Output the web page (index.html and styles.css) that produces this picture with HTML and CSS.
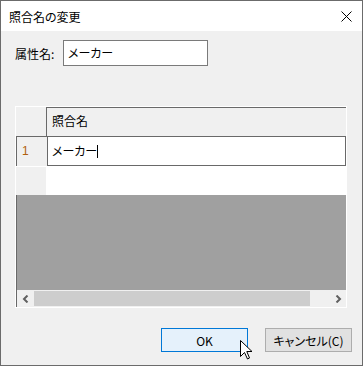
FILE: index.html
```html
<!DOCTYPE html>
<html lang="ja">
<head>
    <meta charset="UTF-8">
    <title>照合名の変更</title>
    <link rel="stylesheet" href="styles.css">
</head>
<body>
    <div class="window">
        <div class="titlebar">
            <span class="title">照合名の変更</span>
            <svg class="close" width="11" height="11" viewBox="0 0 11 11">
                <path d="M0.5 0.5 L10.5 10.5 M10.5 0.5 L0.5 10.5" stroke="#000" stroke-width="1" fill="none"/>
            </svg>
        </div>
        <div class="dialog-body">
            <div class="field">
                <label class="field-label">属性名:</label>
                <div class="textbox">メーカー</div>
            </div>

            <div class="grid">
                <div class="grid-row header-row">
                    <div class="row-head corner"></div>
                    <div class="col-head">照合名</div>
                </div>
                <div class="grid-row current-row">
                    <div class="row-head">1</div>
                    <div class="cell editing">メーカー<span class="caret"></span></div>
                </div>
                <div class="grid-row new-row">
                    <div class="row-head"></div>
                    <div class="cell"></div>
                </div>
                <div class="grid-empty"></div>
                <div class="hscroll">
                    <div class="scroll-btn">
                        <svg width="8" height="8" viewBox="0 0 8 8"><path d="M5.5 0.5 L2 4 L5.5 7.5" stroke="#606060" stroke-width="2" fill="none"/></svg>
                    </div>
                    <div class="scroll-track"><div class="scroll-thumb"></div></div>
                    <div class="scroll-btn">
                        <svg width="8" height="8" viewBox="0 0 8 8"><path d="M2.5 0.5 L6 4 L2.5 7.5" stroke="#606060" stroke-width="2" fill="none"/></svg>
                    </div>
                </div>
            </div>

            <div class="buttons">
                <button class="btn btn-default">OK</button>
                <button class="btn">キャンセル(C)</button>
            </div>
        </div>

        <!-- mouse pointer over the OK button -->
        <svg class="pointer" width="13" height="20" viewBox="0 0 13 20">
            <path d="M0.5 0.5 L0.5 16.5 L4.5 12.5 L7.5 19 L9.5 18 L6.8 11.5 L12 11.5 Z" fill="#fff" stroke="#000" stroke-width="1" stroke-linejoin="miter"/>
        </svg>
    </div>
</body>
</html>
```

FILE: styles.css
```css
* {
    box-sizing: border-box;
}

body {
    margin: 0;
    padding: 0;
    font-family: "Noto Sans CJK JP", "Noto Sans", sans-serif;
    font-size: 12px;
    font-feature-settings: "palt";
    color: #000;
    background: #f0f0f0;
}

.window {
    position: relative;
    width: 363px;
    height: 366px;
    border: 1px solid #6b6b6b;
    background: #f0f0f0;
    display: flex;
    flex-direction: column;
}

.titlebar {
    height: 30px;
    background: #fff;
    display: flex;
    align-items: center;
    justify-content: space-between;
    padding: 0 10px 0 8px;
}

.title {
    line-height: 30px;
    padding-top: 1px;
}

.close {
    display: block;
}

.dialog-body {
    flex: 1;
    display: flex;
    flex-direction: column;
}

.field {
    display: flex;
    align-items: center;
    margin-top: 9px;
    padding-left: 14px;
    height: 26px;
}

.field-label {
    width: 48px;
}

.textbox {
    width: 145px;
    height: 26px;
    border: 1px solid #7a7a7a;
    background: #fff;
    padding-left: 4px;
    line-height: 24px;
}

.grid {
    margin-top: 40px;
    margin-left: 14px;
    width: 332px;
    height: 202px;
    border: 1px solid #fff;
    display: flex;
    flex-direction: column;
}

.grid-row {
    display: flex;
}

.header-row {
    height: 29px;
}

.current-row {
    height: 30px;
}

.new-row {
    height: 29px;
}

.row-head {
    width: 31px;
    background: #f0f0f0;
    border-right: 1px solid #fff;
}

.corner {
    border-right: 1px solid #696969;
}

.current-row .row-head {
    border-top: 1px solid #696969;
    border-left: 1px solid #696969;
    border-right: none;
    padding-left: 5px;
    line-height: 28px;
    color: #b0600c;
    font-family: "Liberation Sans", sans-serif;
    font-size: 12px;
}

.new-row .row-head {
    border-top: 1px solid #fff;
}

.col-head {
    flex: 1;
    background: #f0f0f0;
    border-top: 1px solid #696969;
    padding-left: 5px;
    line-height: 26px;
}

.cell {
    flex: 1;
    background: #fff;
}

.editing {
    border: 1px solid #696969;
    padding-left: 4px;
    line-height: 26px;
    display: flex;
    align-items: center;
}

.caret {
    display: inline-block;
    width: 1px;
    height: 13px;
    background: #000;
}

.grid-empty {
    height: 95px;
    background: #a0a0a0;
    border-left: 1px solid #696969;
}

.hscroll {
    height: 17px;
    display: flex;
    background: #f0f0f0;
    border-left: 1px solid #696969;
}

.scroll-btn {
    width: 17px;
    display: flex;
    align-items: center;
    justify-content: center;
}

.scroll-track {
    flex: 1;
    padding: 1px 0;
}

.scroll-thumb {
    width: 276px;
    height: 15px;
    background: #cdcdcd;
}

.buttons {
    display: flex;
    justify-content: flex-end;
    gap: 17px;
    margin-top: 20px;
    padding-right: 10px;
}

.btn {
    width: 87px;
    height: 24px;
    border: 1px solid #adadad;
    background: #e1e1e1;
    font-family: inherit;
    font-size: 12px;
    font-feature-settings: "palt";
    color: #000;
    padding: 0;
}

.btn-default {
    border-color: #0078d7;
    background: #e5f1fb;
}

.pointer {
    position: absolute;
    left: 239px;
    top: 339px;
}
```
